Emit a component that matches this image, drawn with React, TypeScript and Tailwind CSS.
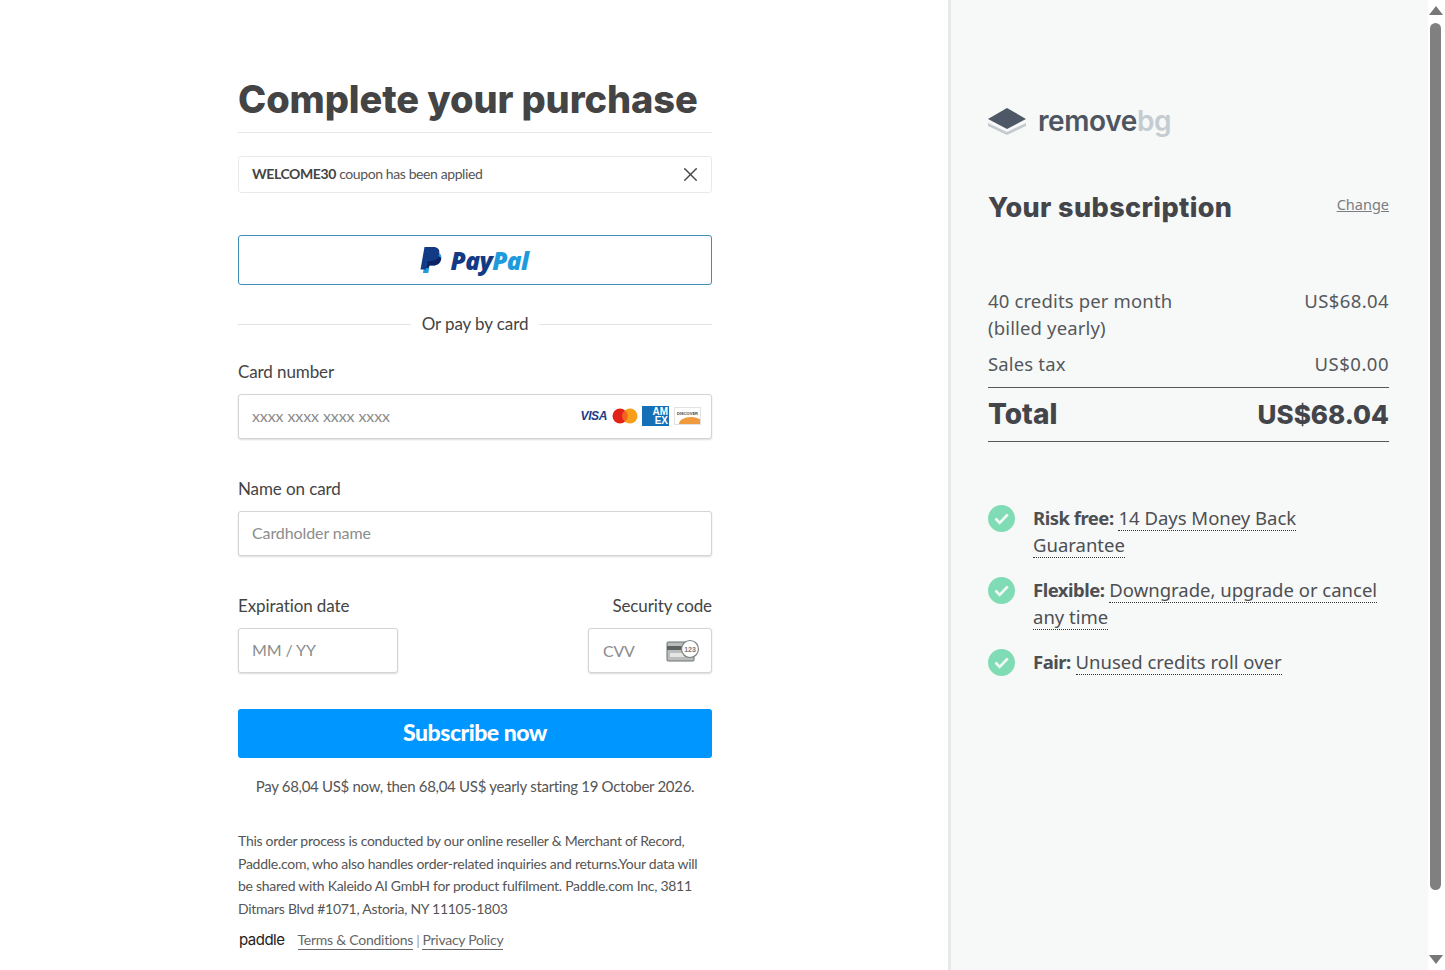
import { X } from "lucide-react";

const lato = "font-['Lato','Liberation_Sans',sans-serif]";

function Field(props: { label: string; placeholder: string; children?: React.ReactNode }) {
  return (
    <div>
      <div className="h-[22px] text-[17px] leading-[22px] tracking-[-0.1px] text-[#444]">{props.label}</div>
      <div className="mt-[11px] flex h-[45px] items-center justify-between rounded-[3px] border border-[#d4d4d4] bg-white pb-[2px] pl-[13px] pr-[10px] shadow-[0_1px_2px_rgba(0,0,0,0.14)]">
        <span className="text-[16px] tracking-[-0.1px] text-[#8c8c8c]">{props.placeholder}</span>
        {props.children}
      </div>
    </div>
  );
}

function CardLogos() {
  return (
    <div className="mt-[1px] flex items-center">
      <span className="mr-[5px] font-['Liberation_Sans',sans-serif] text-[12px] font-bold italic tracking-[-0.4px] text-[#1b3a8a]">VISA</span>
      <svg width="26" height="16" viewBox="0 0 26 16" className="mr-[4px]">
        <circle cx="8" cy="8" r="7.5" fill="#e2231a" />
        <circle cx="18" cy="8" r="7.5" fill="#f79e1b" />
        <path d="M13 2.2a7.5 7.5 0 0 1 0 11.6a7.5 7.5 0 0 1 0-11.6z" fill="#f2641f" />
      </svg>
      <div className="mr-[5px] flex h-[20px] w-[27px] flex-col items-end justify-center bg-[#1670b8] pr-[1px] font-['Liberation_Sans',sans-serif] text-[10px] font-bold leading-[9px] text-white">
        <span>AM</span>
        <span>EX</span>
      </div>
      <div className="relative h-[18px] w-[27px] overflow-hidden border border-[#e2e2e2] bg-white">
        <div className="pt-[3px] text-center font-['Liberation_Sans',sans-serif] text-[4px] font-bold leading-[5px] text-[#444]">DISCOVER</div>
        <div className="absolute -bottom-[7px] -right-[3px] h-[14px] w-[24px] rounded-[50%] bg-[#ef9a3c]" />
      </div>
    </div>
  );
}

function CvvIcon() {
  return (
    <svg width="34" height="26" viewBox="0 0 34 26" className="-mr-[1px]">
      <rect x="1" y="4" width="27" height="19" rx="1" fill="#b9bdbb" stroke="#6f7370" />
      <rect x="1" y="8" width="27" height="4" fill="#5f6361" />
      <rect x="4" y="15" width="14" height="4" fill="#e6e6e6" />
      <circle cx="24" cy="11" r="8.5" fill="#fff" stroke="#7c807e" strokeWidth="1.2" />
      <text x="24" y="13.5" textAnchor="middle" fontSize="7" fontWeight="700" fill="#777" fontFamily="Liberation Sans, sans-serif">123</text>
    </svg>
  );
}

function Benefit(props: { title: string; text: string[] }) {
  return (
    <div className="flex">
      <svg width="27" height="27" viewBox="0 0 27 27" className="mr-[18px] mt-[1px] shrink-0">
        <circle cx="13.5" cy="13.5" r="13.5" fill="#80dcb5" />
        <path d="M7.5 13.5l4.2 4.4 8-8.4" fill="none" stroke="#f1f9f5" strokeWidth="2.6" />
      </svg>
      <div className="min-w-0 text-[18.5px] leading-[27px] text-[#4d4f53]">
        <span className="font-bold tracking-[-0.5px]">{props.title}</span>{" "}
        {props.text.map((t, i) => (
          <span key={i}>
            {i > 0 && <br />}
            <span className="border-b border-dotted border-[#333]">{t}</span>
          </span>
        ))}
      </div>
    </div>
  );
}

export default function App() {
  return (
    <div className="flex h-screen overflow-hidden bg-white text-[#444]">
      {/* checkout */}
      <main className={`w-[948px] shrink-0 pl-[238px] pt-[76px] ${lato}`}>
        <div className="w-[474px]">
          <h1 className="h-[57px] border-b border-[#e6e6e6] font-['Inter',sans-serif] text-[38px] font-extrabold leading-[46px] tracking-[-0.1px] text-[#444]">
            Complete your purchase
          </h1>

          <div className="mt-[23px] flex h-[37px] items-center justify-between rounded-[3px] border border-[#eaeaea] pb-[2px] pl-[13px] pr-[9px] text-[14px] tracking-[-0.4px] text-[#555]">
            <span>
              <span className="font-bold text-[#444]">WELCOME30</span> coupon has been applied
            </span>
            <X size={23} strokeWidth={1.5} className="mt-[2px] text-[#444]" />
          </div>

          <div className="mt-[42px] flex h-[50px] items-center justify-center rounded-[3px] border border-[#3d8fb5] bg-white pr-[2px]">
            <svg width="23" height="28" viewBox="0 0 23 28" className="mr-[8px]">
              <path d="M6.5 6h8c4.5 0 7.5 2.2 6.8 6.5C20.6 17 17.500 19.500 13 19.500H9.500L8.300 27H3z" fill="#1e9bdc" />
              <path d="M4.500 1h8.500c4.500 0 7 2.300 6.200 6.500C18.400 12 15 14.800 10.500 14.800H7.200L5.800 23.500H0.500z" fill="#123a85" />
              <path d="M7.200 14.800h3.300c3.500 0 6.500-1.800 8-4.700 1 0.700 1.800 1 2.800 2.400-0.700 4.500-3.800 7-8.300 7H9.500l-1 2.500H6z" fill="#0d2366" />
            </svg>
            <span className="mt-[3px] font-['Open_Sans',sans-serif] text-[24.5px] font-extrabold italic leading-none tracking-[-0.6px]">
              <span className="text-[#123a85]">Pay</span>
              <span className="text-[#1e9bdc]">Pal</span>
            </span>
          </div>

          <div className="mt-[28px] flex h-[22px] items-center gap-[11px]">
            <div className="h-px flex-1 bg-[#e2e2e2]" />
            <span className="text-[17px] tracking-[-0.1px] text-[#444]">Or pay by card</span>
            <div className="h-px flex-1 bg-[#e2e2e2]" />
          </div>

          <div className="mt-[26px]">
            <Field label="Card number" placeholder="xxxx xxxx xxxx xxxx">
              <CardLogos />
            </Field>
          </div>

          <div className="mt-[39px]">
            <Field label="Name on card" placeholder="Cardholder name" />
          </div>

          <div className="mt-[39px] flex justify-between">
            <div className="w-[160px]">
              <Field label="Expiration date" placeholder="MM / YY" />
            </div>
            <div className="w-[124px]">
              <div className="h-[22px] whitespace-nowrap text-right text-[17px] leading-[22px] tracking-[-0.1px] text-[#444]">Security code</div>
              <div className="mt-[11px] flex h-[45px] items-center justify-between rounded-[3px] border border-[#d4d4d4] bg-white pl-[14px] pr-[12px] shadow-[0_1px_2px_rgba(0,0,0,0.14)]">
                <span className="text-[16px] tracking-[-0.3px] text-[#8c8c8c]">CVV</span>
                <CvvIcon />
              </div>
            </div>
          </div>

          <button className="mt-[36px] h-[49px] w-full rounded-[3px] bg-[#0096ff] pb-[2px] text-[23px] font-black tracking-[-0.5px] text-white">
            Subscribe now
          </button>

          <p className="mt-[18px] text-center text-[15px] leading-[21px] tracking-[-0.3px] text-[#555]">
            Pay 68,04 US$ now, then 68,04 US$ yearly starting 19 October 2026.
          </p>

          <p className="mt-[33px] whitespace-nowrap text-[14px] leading-[22.5px] tracking-[-0.27px] text-[#555]">
            This order process is conducted by our online reseller &amp; Merchant of Record,
            <br />
            Paddle.com, who also handles order-related inquiries and returns.Your data will
            <br />
            be shared with Kaleido AI GmbH for product fulfilment. Paddle.com Inc, 3811
            <br />
            Ditmars Blvd #1071, Astoria, NY 11105-1803
          </p>

          <div className="mt-[9px] flex items-center pl-[1px] text-[14px] tracking-[-0.25px] text-[#666]">
            <span className="mr-[13px] font-['Inter',sans-serif] text-[15px] tracking-[-0.5px] text-[#222]">paddle</span>
            <span className="border-b border-[#666] leading-[19px]">Terms &amp; Conditions</span>
            <span className="mx-[3px] text-[#999]">|</span>
            <span className="border-b border-[#666] leading-[19px]">Privacy Policy</span>
          </div>
        </div>
      </main>

      {/* order summary */}
      <aside className="flex-1 border-l-[3px] border-[#e8e8e8] bg-[#f7f8f8] pl-[37px] pr-[39px] pt-[104px] font-['Noto_Sans',sans-serif]">
        <div className="flex h-[34px] items-center">
          <svg width="38" height="28" viewBox="0 0 38 28" className="mr-[12px]">
            <path d="M0 16l19 9 19-9v3L19 28 0 19z" fill="#c3cbd0" />
            <path d="M19 1l19 11-19 10L0 12z" fill="#4d5766" />
          </svg>
          <span className="font-['Inter',sans-serif] text-[28px] font-semibold leading-none tracking-[-0.4px] text-[#4d5560]">
            remove<span className="text-[#c5ccd1]">bg</span>
          </span>
        </div>

        <div className="mt-[47px] flex items-start justify-between">
          <h2 className="font-['Inter',sans-serif] text-[27px] font-extrabold leading-[46px] tracking-[0.4px] text-[#43454a]">Your subscription</h2>
          <span className="mt-[9px] text-[14.5px] text-[#7a7d82] underline">Change</span>
        </div>

        <div className="mt-[56px] text-[18.5px] leading-[27px] tracking-[0.15px] text-[#55585c]">
          <div className="flex justify-between">
            <span>
              40 credits per month
              <br />
              (billed yearly)
            </span>
            <span className="tracking-[0.4px]">US$68.04</span>
          </div>
          <div className="mt-[9px] flex justify-between border-b border-[#55585c] pb-[10px]">
            <span>Sales tax</span>
            <span className="tracking-[0.5px]">US$0.00</span>
          </div>
          <div className="flex h-[54px] items-center justify-between border-b border-[#55585c] font-['Inter',sans-serif] font-extrabold tracking-normal text-[#43454a]">
            <span className="text-[28px]">Total</span>
            <span className="text-[26px]">US$68.04</span>
          </div>
        </div>

        <div className="mt-[62px] flex flex-col gap-[18px]">
          <Benefit title="Risk free:" text={["14 Days Money Back", "Guarantee"]} />
          <Benefit title="Flexible:" text={["Downgrade, upgrade or cancel", "any time"]} />
          <Benefit title="Fair:" text={["Unused credits roll over"]} />
        </div>
      </aside>

      {/* scrollbar */}
      <div className="flex w-[17px] shrink-0 flex-col items-center bg-white pb-[6px] pr-[2px] pt-[6px]">
        <div className="h-0 w-0 border-x-[7px] border-b-[9px] border-x-transparent border-b-[#777]" />
        <div className="mb-[65px] mt-[8px] w-[11px] flex-1 rounded-full bg-[#808080]" />
        <div className="h-0 w-0 border-x-[7px] border-t-[9px] border-x-transparent border-t-[#777]" />
      </div>
    </div>
  );
}
